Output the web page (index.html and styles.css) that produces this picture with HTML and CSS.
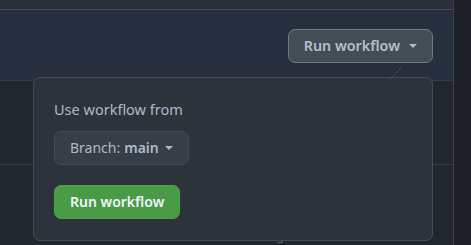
FILE: index.html
```html
<!DOCTYPE html>
<html>
<head>
<meta charset="utf-8">
<link rel="stylesheet" href="styles.css">
</head>
<body>
<div class="page">
  <div class="main">
    <div class="topbar"></div>
    <div class="header">
      <button class="btn btn-run-toggle">Run workflow<span class="caret"></span></button>
    </div>
    <div class="row"></div>
    <div class="row2"><span class="muted">1 month ago</span></div>
  </div>
  <div class="side"></div>
</div>
<div class="menu">
  <svg class="menu-caret" width="16" height="14" viewBox="0 0 16 14"><line x1="1" y1="13" x2="13" y2="1" stroke="#4a525c" stroke-width="1"/></svg>
  <div class="menu-label">Use workflow from</div>
  <button class="btn btn-branch">Branch:<b>main</b><span class="caret"></span></button>
  <button class="btn btn-primary">Run workflow</button>
</div>
</body>
</html>
```
FILE: styles.css
```css
html, body {
  margin: 0;
  padding: 0;
  background: #22272e;
  overflow: hidden;
}
body {
  font-family: "Noto Sans", "Open Sans", sans-serif;
  width: 471px;
  height: 245px;
  position: relative;
}
.page {
  display: flex;
  height: 245px;
}
.main {
  width: 453px;
  border-right: 1px solid #3b424c;
  display: flex;
  flex-direction: column;
}
.side {
  flex: 1;
  background: #1e2127;
}
.topbar {
  height: 10px;
  background: #2c3038;
}
.header {
  border-top: 1px solid #3d4c70;
  border-bottom: 1px solid #333c50;
  background: #272f3e;
  display: flex;
  align-items: center;
  justify-content: flex-end;
  padding-right: 20px;
  box-sizing: border-box;
  height: 79px;
}
.row {
  height: 91px;
  border-bottom: 1px solid #373e47;
  background: #22272e;
}
.row2 {
  flex: 1;
  padding: 58px 0 0 214px;
}
.muted {
  color: #5f6873;
  font-size: 13px;
}
.btn {
  font-family: inherit;
  font-size: 14px;
  line-height: 20px;
  height: 34px;
  box-sizing: border-box;
  border-radius: 7px;
  padding: 0 15px;
  display: inline-flex;
  align-items: center;
  white-space: nowrap;
  cursor: pointer;
}
.btn-run-toggle {
  background: #444c56;
  border: 1px solid #6e7986;
  color: #b3c0cc;
  font-weight: 600;
  font-size: 14.3px;
  height: 34px;
  margin-top: 1px;
}
.caret {
  display: inline-block;
  width: 0;
  height: 0;
  border-left: 4.5px solid transparent;
  border-right: 4.5px solid transparent;
  border-top: 4.5px solid #adbac7;
  margin-left: 9px;
}
.menu {
  position: absolute;
  left: 33px;
  top: 77px;
  width: 400px;
  height: 164px;
  box-sizing: border-box;
  background: #2d333b;
  border: 1px solid #444c56;
  border-radius: 7px;
  padding: 21px 20px 0 20px;
  display: flex;
  flex-direction: column;
  align-items: flex-start;
}
.menu-caret {
  position: absolute;
  left: 354px;
  top: -11px;
}
.menu-label {
  color: #adbac7;
  font-size: 14.5px;
  line-height: 20px;
  white-space: nowrap;
}
.btn-branch {
  margin-top: 12px;
  background: #373e47;
  border: 1px solid #434a54;
  color: #adbac7;
  font-weight: 400;
  font-size: 14px;
}
.btn-branch b {
  font-weight: 600;
  margin-left: 4px;
}
.btn-branch .caret {
  margin-left: 6px;
}
.btn-primary {
  margin-top: 20px;
  background: #4a9b47;
  border: 1px solid #50a24c;
  color: #f0f6fc;
  font-weight: 600;
  justify-content: center;
}
```
